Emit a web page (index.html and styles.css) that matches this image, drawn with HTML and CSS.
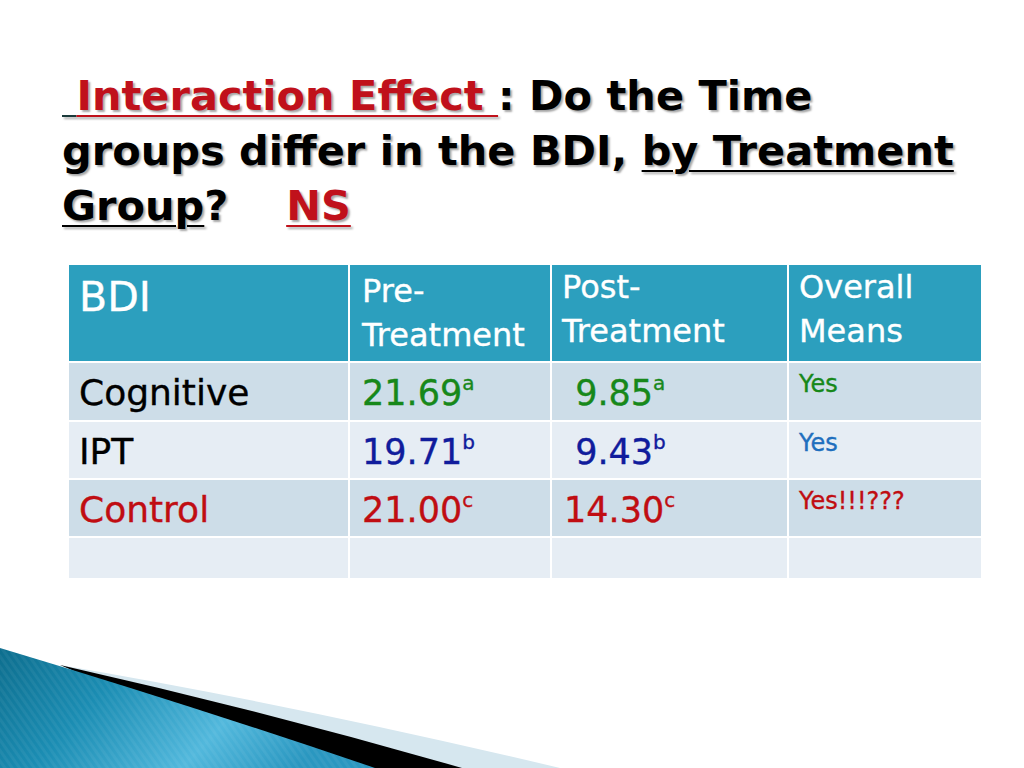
FILE: index.html
```html
<!DOCTYPE html>
<html>
<head>
<meta charset="utf-8">
<title>Interaction Effect</title>
<link rel="stylesheet" href="styles.css">
</head>
<body>
<div class="slide">
  <h1 class="title">
    <span class="u-dark">&nbsp;</span><span class="u-red">Interaction Effect </span>: Do the Time<br>
    groups differ in the BDI, <span class="u">by Treatment</span><br>
    <span class="u">Group</span>?&nbsp;&nbsp;&nbsp;&nbsp;<span class="u-red ns">NS</span>
  </h1>

  <div class="grid">
    <div class="cell head big">BDI</div>
    <div class="cell head">Pre-<br>Treatment</div>
    <div class="cell head up">Post-<br>Treatment</div>
    <div class="cell head up">Overall<br>Means</div>

    <div class="cell odd">Cognitive</div>
    <div class="cell odd num green">21.69<sup>a</sup></div>
    <div class="cell odd num green">&nbsp;9.85<sup>a</sup></div>
    <div class="cell odd yes green">Yes</div>

    <div class="cell even">IPT</div>
    <div class="cell even num navy">19.71<sup>b</sup></div>
    <div class="cell even num navy">&nbsp;9.43<sup>b</sup></div>
    <div class="cell even yes blue">Yes</div>

    <div class="cell odd red">Control</div>
    <div class="cell odd num red">21.00<sup>c</sup></div>
    <div class="cell odd num red">14.30<sup>c</sup></div>
    <div class="cell odd yes red">Yes!!!???</div>

    <div class="cell even"></div>
    <div class="cell even"></div>
    <div class="cell even"></div>
    <div class="cell even"></div>
  </div>

  <svg class="swoosh" width="600" height="130" viewBox="0 0 600 130" aria-hidden="true">
    <defs>
      <linearGradient id="bg" x1="0" y1="0" x2="1" y2="0.3">
        <stop offset="0" stop-color="#0d6e8e"/>
        <stop offset="0.35" stop-color="#1b8db3"/>
        <stop offset="0.72" stop-color="#52b8dc"/>
        <stop offset="1" stop-color="#2a97c0"/>
      </linearGradient>
      <pattern id="stripes" width="6" height="6" patternUnits="userSpaceOnUse" patternTransform="rotate(-35)">
        <rect width="3" height="6" fill="#ffffff" opacity="0.05"/>
      </pattern>
    </defs>
    <path d="M60,27 Q300,68 560,130 L300,130 Z" fill="#d6e7ef"/>
    <path d="M60,27 Q260,72 462,130 L300,130 Z" fill="#000"/>
    <path d="M0,10 Q187,66 375,130 L0,130 Z" fill="url(#bg)"/>
    <path d="M0,10 Q187,66 375,130 L0,130 Z" fill="url(#stripes)"/>
  </svg>
</div>
</body>
</html>
```

FILE: styles.css
```css
html, body {
  margin: 0;
  padding: 0;
  background: #ffffff;
}

.slide {
  position: relative;
  width: 1024px;
  height: 768px;
  overflow: hidden;
  background: #ffffff;
  font-family: "DejaVu Sans", Verdana, sans-serif;
}

.title {
  margin: 0;
  padding: 68px 0 0 62px;
  font-size: 41.5px;
  line-height: 55px;
  font-weight: bold;
  color: #000;
  text-shadow: 2px 2px 2px rgba(0, 0, 0, 0.35);
  white-space: nowrap;
}

.u-dark {
  text-decoration: underline;
  text-decoration-color: #1a3a3a;
  text-decoration-thickness: 2px;
  text-underline-offset: 5px;
}

.u-red {
  color: #c0111b;
  text-decoration: underline;
  text-decoration-color: #c0111b;
  text-decoration-thickness: 2px;
  text-underline-offset: 5px;
}

.u {
  text-decoration: underline;
  text-decoration-thickness: 2px;
  text-underline-offset: 5px;
}

.grid {
  display: grid;
  grid-template-columns: 279px 200px 235px 192px;
  grid-template-rows: 96px 57px 56px 56px 40px;
  gap: 2px;
  margin: 32px 0 0 69px;
  width: 912px;
  background: #ffffff;
}

.cell {
  padding: 8px 10px 0 10px;
  font-size: 36px;
  line-height: 44px;
  color: #000;
  -webkit-text-stroke: 0.35px currentColor;
}

.head {
  background: #2c9fbe;
  color: #ffffff;
  font-size: 32px;
  line-height: 44px;
  padding-top: 4px;
  padding-left: 12px;
}

.head.up {
  padding-top: 0;
  padding-left: 10px;
}

.head.big {
  font-size: 41px;
  line-height: 48px;
  padding-left: 10px;
  padding-top: 8px;
}

.odd {
  background: #cddde8;
}

.even {
  background: #e6edf4;
}

.num {
  font-size: 35px;
  padding-left: 12px;
}

.num sup {
  font-size: 20px;
  vertical-align: top;
  position: relative;
  top: 2px;
  line-height: 1;
}

.yes {
  font-size: 24px;
  line-height: 30px;
  padding-top: 6px;
}

.green { color: #17881a; }
.navy { color: #101c9c; }
.blue { color: #1f6fbe; }
.red { color: #c00d12; }

.swoosh {
  position: absolute;
  left: 0;
  bottom: 0;
}
```
